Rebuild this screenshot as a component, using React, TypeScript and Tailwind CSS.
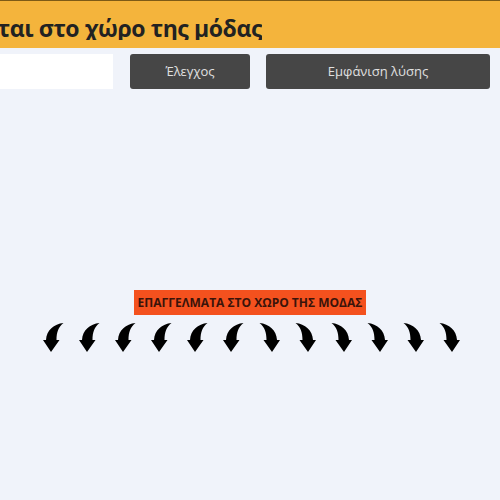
import React from "react";

function ArrowLeft() {
  return (
    <svg width="21" height="30" viewBox="0 0 21 30" className="block">
      <path d="M20.5 1 C11 2 3.5 8 3 18 L0 18 L8 30 L16.5 18 L13.5 18 C13.5 10 15.5 5 20.5 1 Z" fill="#000" />
    </svg>
  );
}

function ArrowRight() {
  return (
    <svg width="21" height="30" viewBox="0 0 21 30" className="block">
      <path d="M0.5 1 C10 2 17.5 8 18 18 L21 18 L13 30 L4.5 18 L7.5 18 C7.5 10 5.5 5 0.5 1 Z" fill="#000" />
    </svg>
  );
}

export default function App() {
  const left = [0, 1, 2, 3, 4, 5];
  const right = [0, 1, 2, 3, 4, 5];
  return (
    <div
      className="w-[500px] h-[500px] overflow-hidden bg-[#f0f3fa] border-t border-[#7d5a16]"
      style={{ fontFamily: '"Open Sans", "Noto Sans", sans-serif' }}
    >
      <div className="h-[47px] bg-[#f4b43c] flex items-center">
        <div className="w-[262px] flex justify-end overflow-hidden whitespace-nowrap">
          <h1 className="text-[23px] tracking-[-0.4px] font-bold text-[#222222] leading-none pt-[8px]">
            Επαγγέλματα που σχετίζονται στο χώρο της μόδας
          </h1>
        </div>
      </div>
      <div className="flex items-stretch h-[35px] mt-[6px] pr-[10px] gap-[17px]">
        <div className="w-[113px] bg-white" />
        <button className="w-[120px] bg-[#464646] rounded-[3px] text-[#e0e0e0] text-[13px]">
          Έλεγχος
        </button>
        <button className="flex-1 ml-[-1px] bg-[#464646] rounded-[3px] text-[#e0e0e0] text-[13px]">
          Εμφάνιση λύσης
        </button>
      </div>
      <div className="flex flex-col items-center mt-[201px]">
        <div className="w-[232px] h-[25px] bg-[#f4511e] flex items-center justify-center text-[12px] font-bold text-[#3a140a]">
          ΕΠΑΓΓΕΛΜΑΤΑ ΣΤΟ ΧΩΡΟ ΤΗΣ ΜΟΔΑΣ
        </div>
        <div className="flex gap-[15px] mt-[7px] pl-[2px]">
          {left.map((i) => (
            <ArrowLeft key={"l" + i} />
          ))}
          {right.map((i) => (
            <ArrowRight key={"r" + i} />
          ))}
        </div>
      </div>
    </div>
  );
}
